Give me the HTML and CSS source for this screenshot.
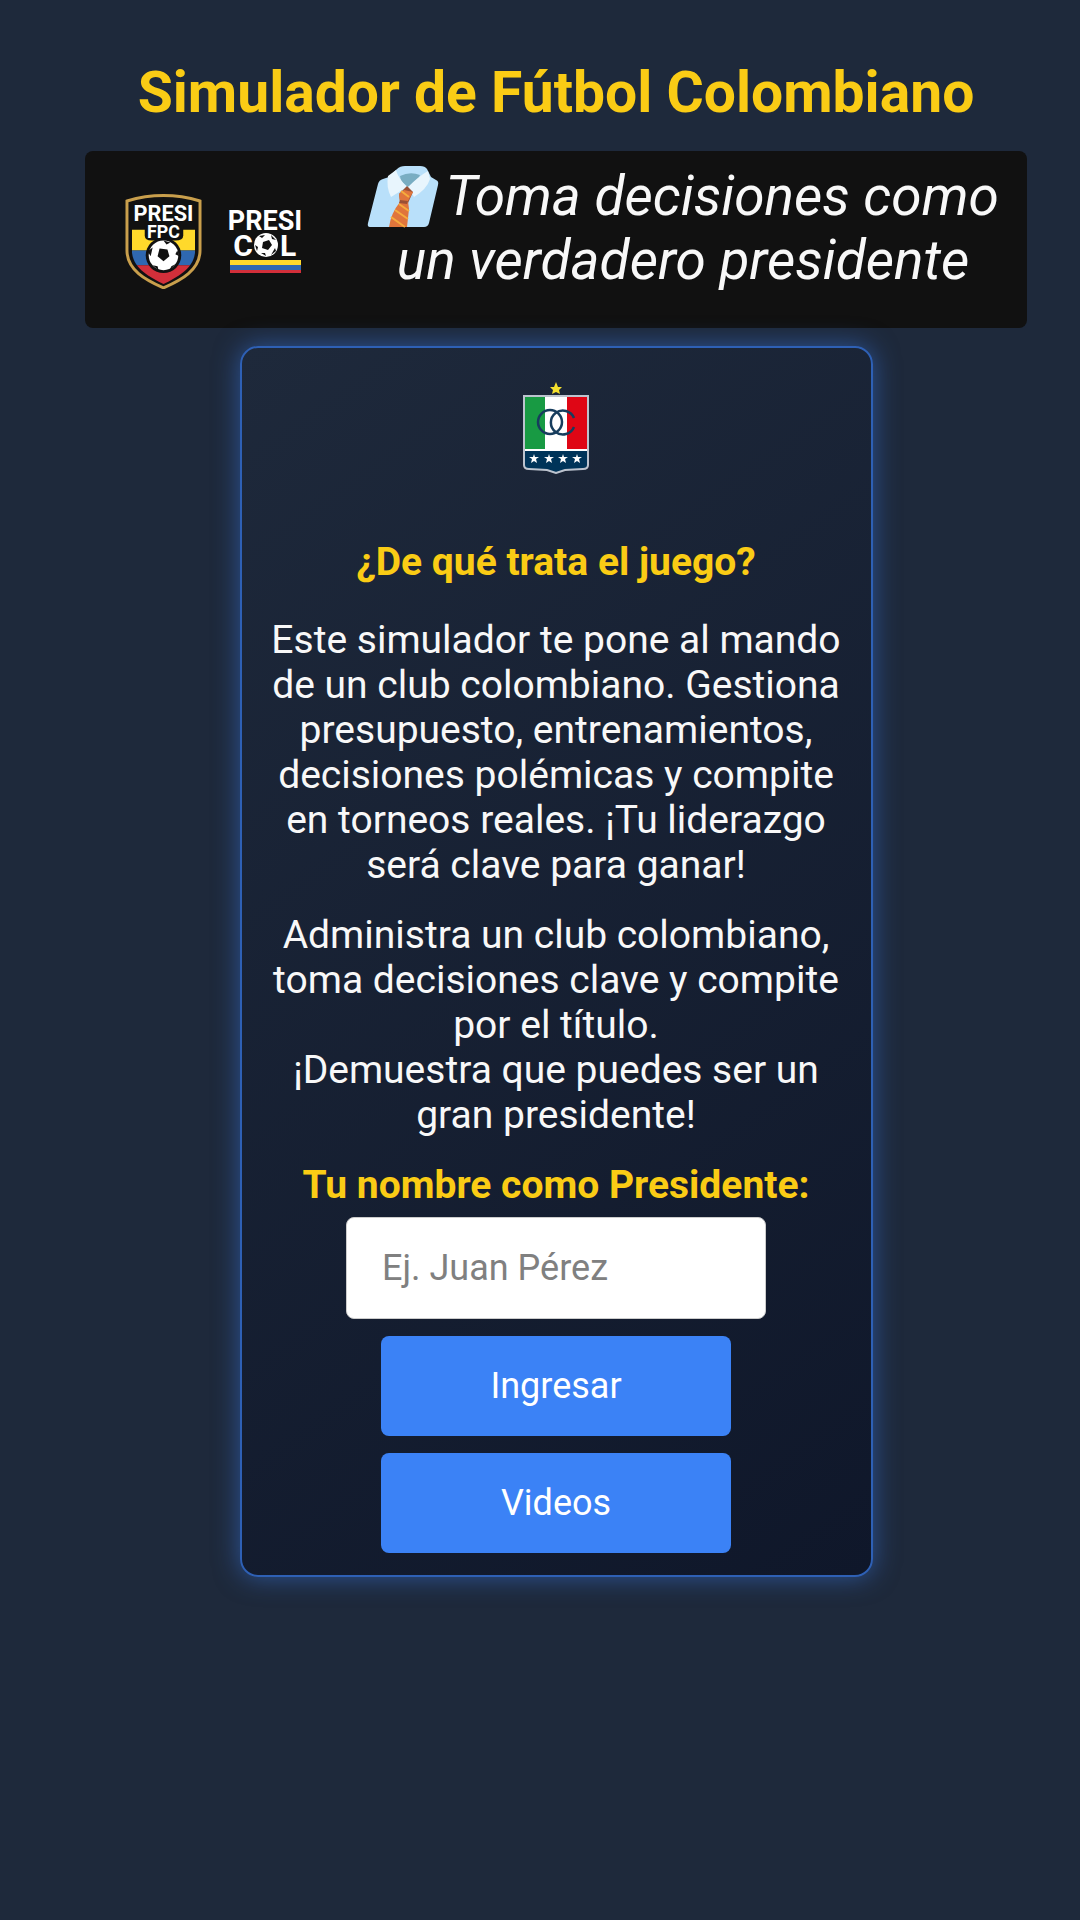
FILE: index.html
```html
<!DOCTYPE html>
<html lang="es">
<head>
<meta charset="utf-8">
<meta name="viewport" content="width=device-width, initial-scale=1">
<title>Simulador de Fútbol Colombiano</title>
<link rel="stylesheet" href="styles.css">
</head>
<body>
<main class="page">
  <h1 class="title">Simulador de Fútbol Colombiano</h1>

  <section class="banner">
    <div class="logos">
      <svg class="logo-fpc" viewBox="0 0 78 96" role="img" aria-label="Presi FPC">
        <defs>
          <clipPath id="shield"><path d="M7 10Q39 0 71 10V57C71 74 54 84 39 91C24 84 7 74 7 57Z"/></clipPath>
        </defs>
        <path d="M2 7Q39-4 76 7V57C76 77 57 87 39 95C21 87 2 77 2 57Z" fill="#111" stroke="#c99f4c" stroke-width="3"/>
        <g clip-path="url(#shield)">
          <path fill="#ffd92b" d="M0 36H78V57H0z"/>
          <path fill="#2f68b1" d="M0 57H78V72H0z"/>
          <path fill="#d22f3a" d="M0 72H78V96H0z"/>
          <path fill="#111" d="M20 30H59V42Q59 47 51 47H27Q20 47 20 42Z"/>
          <circle cx="39" cy="62" r="18" fill="#111"/>
        </g>
        <circle cx="39" cy="62" r="15" fill="#fff"/>
        <path fill="#111" d="M35 55L43 56 45 63 39 68 33 63ZM23 58L28 54 26 63ZM39 47L46 49 42 51ZM53 57L55 63 51 61ZM28 72L33 73 34 77ZM47 73L51 71 45 77Z"/>
        <text class="logo-text" x="39" y="27" font-size="22">PRESI</text>
        <text class="logo-text" x="39" y="44" font-size="18">FPC</text>
      </svg>
      <svg class="logo-col" viewBox="0 0 72 66" role="img" aria-label="Presi Col">
        <text class="logo-text" x="36" y="21" font-size="27">PRESI</text>
        <text class="logo-text" x="14" y="47" font-size="30">C</text>
        <text class="logo-text" x="59" y="47" font-size="30">L</text>
        <circle cx="37" cy="36" r="12" fill="#fff"/>
        <path fill="#111" d="M34 33L40 31 43 36 39 41 33 39ZM30 27L36 26 33 29ZM42 26L47 31 43 30ZM26 36L29 38 28 42ZM46 39L47 42 42 46ZM32 44L36 44 37 47Z"/>
        <path fill="#ffd92b" d="M1 51H72V56H1z"/>
        <path fill="#2f68b1" d="M1 56H72V61H1z"/>
        <path fill="#d22f3a" d="M1 61H72V64H1z"/>
      </svg>
    </div>
    <p class="slogan"><svg class="shirt" viewBox="0 0 72 62" role="img" aria-label="Camisa con corbata">
        <path fill="#b9e0fa" d="M11 18Q12 14 16 13L22 11 30 3Q33 0 38 0H53Q58 0 60 3L64 11 69 14Q72 15 71 19L62 57Q61 61 57 61H3Q0 61 1 57Z"/>
        <path fill="#79adc2" d="M33 10Q43 5 53 9L50 16 41 21 34 15Z"/>
        <path fill="#e8f5fd" d="M29 4Q31 12 40 21L24 31Q19 21 21 10ZM61 5Q52 10 41 21L47 31Q60 23 63 13Z"/>
        <path fill="#9a5035" d="M40 20L46 26 41 37 33 36 32 28Z"/>
        <path fill="#e0753c" d="M37 24L46 26 41 35 42 43 40 61H22Q24 47 33 36L32 28Z"/>
        <path fill="none" stroke="#f6ac3d" stroke-width="2" d="M34 25L42 31M32 38L42 45M28 44L41 53M24 51L38 61"/>
        <path fill="#9a5035" d="M33 34L41 35 40 38 32 37Z"/>
      </svg> Toma decisiones como un verdadero presidente</p>
  </section>

  <section class="card">
    <svg class="crest" viewBox="0 0 66 92" role="img" aria-label="Once Caldas">
      <path fill="#f5e02e" d="M33 0L35 5H39L36 8 37 12 33 10 29 12 30 8 27 5H31Z"/>
      <path d="M1 14H65V83Q65 87 60 87L42 88 33 91 24 88 6 87Q1 87 1 83Z" fill="#003459" stroke="#bcc3ce" stroke-width="2"/>
      <path fill="#189a43" d="M2 15H22V67H2z"/>
      <path fill="#fff" d="M22 15H44V67H22z"/>
      <path fill="#df0615" d="M44 15H64V67H44z"/>
      <path fill="#fff" d="M2 67H64V69H2z"/>
      <ellipse cx="27" cy="40" rx="12" ry="12" fill="none" stroke="#173d5d" stroke-width="2.5"/>
      <path d="M51 36A12 12 0 1 0 51 45" fill="none" stroke="#173d5d" stroke-width="2.5"/>
      <path id="s" fill="#fff" d="M11 72L12 75H16L13 77 14 81 11 79 8 81 9 77 6 75H10Z"/>
      <use href="#s" x="15"/><use href="#s" x="29"/><use href="#s" x="43"/>
    </svg>
    <h2 class="heading">¿De qué trata el juego?</h2>
    <p class="text">Este simulador te pone al mando de un club colombiano. Gestiona presupuesto, entrenamientos, decisiones polémicas y compite en torneos reales. ¡Tu liderazgo será clave para ganar!</p>
    <p class="text">Administra un club colombiano, toma decisiones clave y compite por el título.<br>¡Demuestra que puedes ser un gran presidente!</p>
    <form class="form">
      <label class="label" for="nombre">Tu nombre como Presidente:</label>
      <input class="field" id="nombre" type="text" placeholder="Ej. Juan Pérez">
      <button class="button" type="button">Ingresar</button>
      <button class="button" type="button">Videos</button>
    </form>
  </section>
</main>
</body>
</html>
```
FILE: styles.css
```css
* { box-sizing: border-box; }

body {
  margin: 0;
  min-height: 100vh;
  background: #1e293b;
  color: #f8f8f8;
  font-family: Roboto, "Liberation Sans", sans-serif;
}

.page {
  padding: 60px 53px 60px 85px;
}

.title {
  margin: 0 0 25px;
  color: #facc15;
  font-size: 57px;
  line-height: 66px;
  text-align: center;
}

.banner {
  display: flex;
  align-items: flex-start;
  gap: 46px;
  min-height: 177px;
  padding: 13px 8px 12px 40px;
  border-radius: 8px;
  background: #111;
}

.logos {
  display: flex;
  flex: none;
  align-items: center;
  gap: 27px;
  margin-top: 30px;
}

.logo-fpc { width: 77px; height: 95px; }
.logo-col { width: 72px; height: 66px; overflow: visible; }

.logo-text {
  fill: #fff;
  font-weight: 700;
  text-anchor: middle;
}

.slogan {
  flex: 1;
  margin: 0;
  font-size: 55px;
  font-style: italic;
  line-height: 64px;
  text-align: center;
}

.shirt {
  width: 72px;
  height: 62px;
  margin-right: -6px;
  vertical-align: -13px;
}

.card {
  display: flex;
  flex-direction: column;
  align-items: center;
  max-width: 633px;
  margin: 18px auto 0;
  padding: 34px 26px 22px;
  border: 2px solid #2e60b5;
  border-radius: 18px;
  background: linear-gradient(145deg, #1e293b, #0f172a);
  box-shadow: 0 0 26px rgba(59, 130, 246, 0.5);
  text-align: center;
}

.crest { width: 66px; height: 92px; }

.heading {
  margin: 66px 0 33px;
  color: #facc15;
  font-size: 39px;
  line-height: 45px;
}

.text {
  margin: 0 0 25px;
  font-size: 39px;
  line-height: 45px;
}

.form {
  display: flex;
  flex-direction: column;
  align-items: center;
  gap: 17px;
  width: 100%;
}

.label {
  margin-bottom: -8px;
  color: #facc15;
  font-size: 39px;
  font-weight: 700;
  line-height: 45px;
}

.field {
  width: 100%;
  max-width: 420px;
  height: 102px;
  padding: 0 35px;
  border: 1px solid #ccc;
  border-radius: 8px;
  background: #fff;
  color: #111;
  font: inherit;
  font-size: 36px;
}

.field::placeholder { color: #808080; }

.button {
  width: 100%;
  max-width: 350px;
  height: 100px;
  border: 0;
  border-radius: 8px;
  background: #3b82f6;
  color: #fff;
  font: inherit;
  font-size: 36px;
}
```
